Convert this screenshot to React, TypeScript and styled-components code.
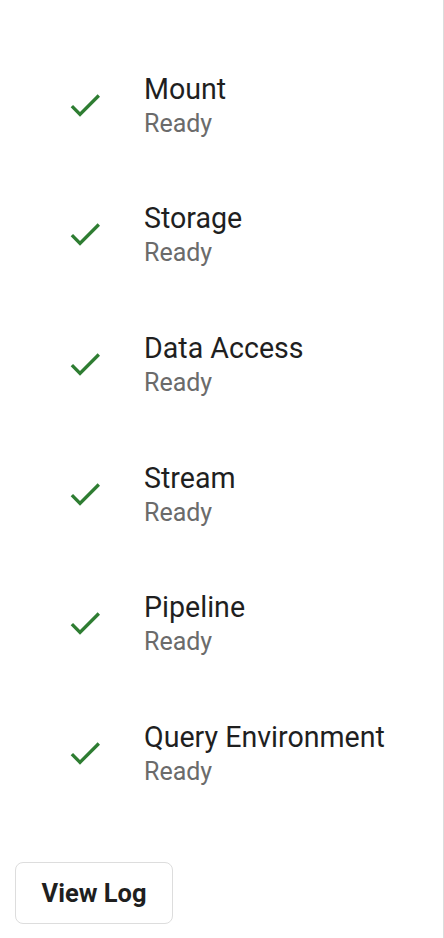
import React from "react";
import styled, { createGlobalStyle } from "styled-components";

const GlobalStyle = createGlobalStyle`
  html, body {
    margin: 0;
    padding: 0;
    background: #ffffff;
  }
  body {
    font-family: Roboto, "Noto Sans", "Liberation Sans", sans-serif;
  }
`;

const Panel = styled.div`
  box-sizing: border-box;
  width: 444px;
  min-height: 938px;
  border-right: 1px solid #dcdcdc;
  padding-top: 36px;
  display: flex;
  flex-direction: column;
`;

const List = styled.ul`
  list-style: none;
  margin: 0;
  padding: 0;
  display: flex;
  flex-direction: column;
`;

const Row = styled.li`
  box-sizing: border-box;
  height: 129.6px;
  padding: 36.8px 0 0 65px;
  display: flex;
  align-items: flex-start;
  gap: 39px;
`;

const IconBox = styled.span`
  width: 40px;
  height: 40px;
  margin-top: 12px;
  flex: none;
  display: flex;
  color: #2e7d32;
`;

const TextCol = styled.div`
  display: flex;
  flex-direction: column;
  gap: 5px;
`;

const Title = styled.span`
  font-size: 28.6px;
  line-height: 32px;
  color: #1f1f1f;
`;

const Status = styled.span`
  font-size: 25px;
  line-height: 28px;
  color: #6b6b6b;
`;

const Footer = styled.div`
  padding: 48px 0 0 15px;
`;

const Button = styled.button`
  box-sizing: border-box;
  width: 158px;
  height: 62px;
  border: 1px solid #dddddd;
  border-radius: 8px;
  background: #ffffff;
  font-family: Roboto, "Noto Sans", "Liberation Sans", sans-serif;
  font-size: 25.5px;
  font-weight: 700;
  color: #1f1f1f;
  padding: 0;
`;

const Check = () => (
  <svg width="40" height="40" viewBox="0 0 24 24" fill="currentColor">
    <path d="M9 16.17L4.83 12l-1.42 1.41L9 19 21 7l-1.41-1.41z" />
  </svg>
);

const items = [
  "Mount",
  "Storage",
  "Data Access",
  "Stream",
  "Pipeline",
  "Query Environment",
];

export default function App() {
  return (
    <>
      <GlobalStyle />
      <Panel>
        <List>
          {items.map((name) => (
            <Row key={name}>
              <IconBox>
                <Check />
              </IconBox>
              <TextCol>
                <Title>{name}</Title>
                <Status>Ready</Status>
              </TextCol>
            </Row>
          ))}
        </List>
        <Footer>
          <Button>View Log</Button>
        </Footer>
      </Panel>
    </>
  );
}
